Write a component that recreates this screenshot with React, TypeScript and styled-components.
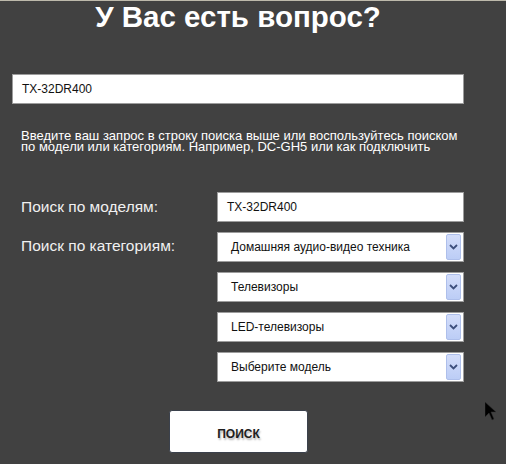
import React from "react";
import styled, { createGlobalStyle } from "styled-components";

const GlobalStyle = createGlobalStyle`
  html, body {
    margin: 0;
    padding: 0;
    background: #414141;
  }
`;

const Page = styled.div`
  position: relative;
  min-height: 463px;
  border-top: 1px solid #bdb9ab;
  font-family: "Liberation Sans", Arial, sans-serif;
  overflow: hidden;
`;

const Column = styled.div`
  width: 452px;
  margin-left: 12px;
  display: flex;
  flex-direction: column;
`;

const Title = styled.h1`
  margin: 0;
  font-size: 29.5px;
  font-weight: bold;
  line-height: 32px;
  color: #ffffff;
  text-align: center;
`;

const Field = styled.div<{ $mt?: number }>`
  box-sizing: border-box;
  height: 30px;
  margin-top: ${(p) => p.$mt ?? 0}px;
  background: #ffffff;
  border: 1px solid #9c9c9c;
  padding: 0 9px;
  display: flex;
  align-items: center;
  font-size: 12px;
  color: #111;
`;

const Hint = styled.p`
  margin: 26px 0 0;
  padding-left: 9px;
  font-size: 13px;
  line-height: 11px;
  color: #ffffff;
`;

const Form = styled.div`
  margin-top: 40px;
  display: grid;
  grid-template-columns: 205px 247px;
  row-gap: 10px;
`;

const Label = styled.div<{ $top?: boolean }>`
  padding-left: 9px;
  font-size: 15.5px;
  color: #f0f0f0;
  height: 30px;
  display: flex;
  align-items: ${(p) => (p.$top ? "flex-start" : "center")};
  padding-top: ${(p) => (p.$top ? "5px" : "0")};
  box-sizing: border-box;
`;

const Select = styled.div`
  box-sizing: border-box;
  height: 30px;
  background: #ffffff;
  border: 1px solid #9c9c9c;
  display: flex;
  align-items: stretch;
  font-size: 12px;
  color: #111;
`;

const SelectText = styled.span`
  flex: 1;
  display: flex;
  align-items: center;
  padding-left: 13px;
`;

const Arrow = styled.span`
  width: 15px;
  margin: 1px 2px 1px 0;
  box-sizing: border-box;
  border: 1px solid #aebfeb;
  border-radius: 2px;
  background: linear-gradient(#d3ddfa, #bccdf6);
  display: flex;
  align-items: center;
  justify-content: center;
`;

const Button = styled.button`
  margin: 28px 0 0 157px;
  width: 139px;
  height: 43px;
  background: #ffffff;
  border: 1px solid #3b414c;
  border-radius: 3px;
  font-family: "Liberation Sans", Arial, sans-serif;
  font-size: 12px;
  font-weight: bold;
  color: #1e1e1e;
  text-shadow: 1px 2px 2px rgba(0, 0, 0, 0.3);
  padding: 5px 0 0;
  cursor: pointer;
`;

const Cursor = styled.svg`
  position: absolute;
  left: 485px;
  top: 401px;
`;

const Chevron = () => (
  <svg width="9" height="6" viewBox="0 0 9 6">
    <path d="M1 1l3.5 3.5L8 1" stroke="#3d4f7c" strokeWidth="1.8" fill="none" />
  </svg>
);

const categories = [
  "Домашняя аудио-видео техника",
  "Телевизоры",
  "LED-телевизоры",
  "Выберите модель",
];

export default function App() {
  return (
    <>
      <GlobalStyle />
      <Page>
        <Column>
          <Title>У Вас есть вопрос?</Title>
          <Field $mt={41}>TX-32DR400</Field>
          <Hint>
            Введите ваш запрос в строку поиска выше или воспользуйтесь поиском
            по модели или категориям. Например, DC-GH5 или как подключить
          </Hint>
          <Form>
            <Label>Поиск по моделям:</Label>
            <Field>TX-32DR400</Field>
            <Label $top>Поиск по категориям:</Label>
            <Select>
              <SelectText>{categories[0]}</SelectText>
              <Arrow><Chevron /></Arrow>
            </Select>
            {categories.slice(1).map((c) => (
              <React.Fragment key={c}>
                <div />
                <Select>
                  <SelectText>{c}</SelectText>
                  <Arrow><Chevron /></Arrow>
                </Select>
              </React.Fragment>
            ))}
          </Form>
          <Button>ПОИСК</Button>
        </Column>
        <Cursor width="12" height="19" viewBox="0 0 12 19">
          <path d="M0 0v15l4-4 3 7 2-1-3-7h5z" fill="#000" stroke="#333" strokeWidth="0.5" />
        </Cursor>
      </Page>
    </>
  );
}
